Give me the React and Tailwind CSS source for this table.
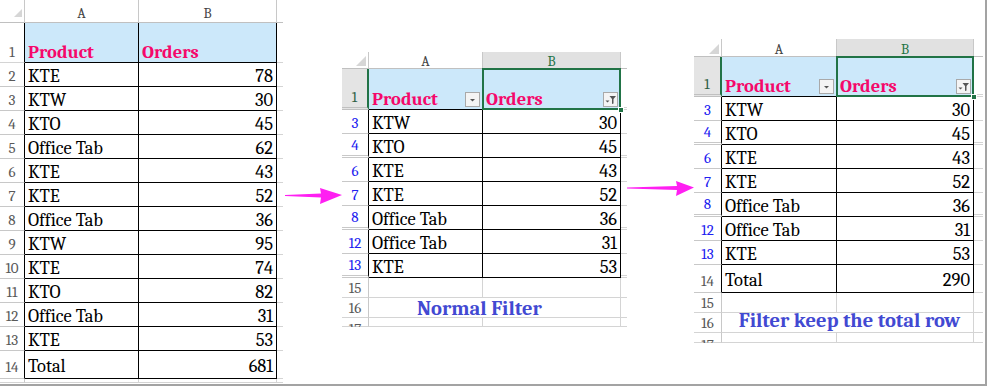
import React from 'react';

// Rows are [row number, product, orders]
const ALL_ROWS = [
  [2, 'KTE', 78],
  [3, 'KTW', 30],
  [4, 'KTO', 45],
  [5, 'Office Tab', 62],
  [6, 'KTE', 43],
  [7, 'KTE', 52],
  [8, 'Office Tab', 36],
  [9, 'KTW', 95],
  [10, 'KTE', 74],
  [11, 'KTO', 82],
  [12, 'Office Tab', 31],
  [13, 'KTE', 53],
];

const FILTERED_ROWS = [
  [3, 'KTW', 30],
  [4, 'KTO', 45],
  [6, 'KTE', 43],
  [7, 'KTE', 52],
  [8, 'Office Tab', 36],
  [12, 'Office Tab', 31],
  [13, 'KTE', 53],
];

const SHEETS = {
  left: {
    w: { hdr: 'w-[25px]', a: 'w-[114px]', b: 'w-[138px]', x: 'w-[6px]', ab: 'w-[252px]' },
    colHdrH: 'h-[23px]',
    colHdrPb: 'pb-[2px]',
    cornerPb: 'pb-[5px]',
    tri: 8,
    row1H: 'h-[40px]',
    rows: ALL_ROWS,
    total: [14, 'Total', 681],
    lastHidden: false,
    trailing: [{ n: 15, h: 'h-[4px]', blank: true }],
    filtered: false,
  },
  middle: {
    w: { hdr: 'w-[27px]', a: 'w-[114px]', b: 'w-[138px]', x: 'w-[6px]', ab: 'w-[252px]' },
    colHdrH: 'h-[17px]',
    colHdrPb: 'pb-0',
    cornerPb: 'pb-[2px]',
    tri: 10,
    row1H: 'h-[41px]',
    rows: FILTERED_ROWS,
    total: null,
    lastHidden: true,
    trailing: [
      { n: 15, h: 'h-[20px]' },
      { n: 16, h: 'h-[20px]', text: 'Normal Filter', textCls: 'pl-[48px] leading-[16px]' },
      { n: 17, h: 'h-[9px]', pt: 'pt-[4px]' },
    ],
    filtered: true,
  },
  right: {
    w: { hdr: 'w-[28px]', a: 'w-[115px]', b: 'w-[137px]', x: 'w-[9px]', ab: 'w-[252px]' },
    colHdrH: 'h-[18px]',
    colHdrPb: 'pb-0',
    cornerPb: 'pb-[2px]',
    tri: 10,
    row1H: 'h-[40px]',
    rows: FILTERED_ROWS,
    total: [14, 'Total', 290],
    lastHidden: false,
    trailing: [
      { n: 15, h: 'h-[20px]' },
      { n: 16, h: 'h-[20px]', text: 'Filter keep the total row', textCls: 'justify-center pl-[4px] leading-[22px]' },
      { n: 17, h: 'h-[10px]', pt: 'pt-[5px]' },
    ],
    filtered: true,
  },
};

function FilterButton({ funnel }) {
  return (
    <div className="absolute right-[2px] bottom-[2px] w-[15px] h-[15px] border border-[#a9a9a9] bg-[#f4f4f4]">
      <svg width="13" height="13" viewBox="0 0 13 13">
        {funnel ? (
          <>
            <polygon points="1.5,7.5 5.5,7.5 3.5,9.5" fill="#555" />
            <polygon points="5.5,3 12,3 9.5,6 9.5,10.5 8,11 8,6" fill="#555" />
          </>
        ) : (
          <polygon points="4,6 9,6 6.5,8.5" fill="#555" />
        )}
      </svg>
    </div>
  );
}

function Selection() {
  return (
    <>
      <div className="absolute -left-[1px] -top-[1px] -right-[1px] -bottom-[1px] border-2 border-[#217346]" />
      <div className="absolute -right-[4px] -bottom-[4px] w-[6px] h-[6px] bg-[#217346] border border-white" />
    </>
  );
}

function Sheet({ cfg }) {
  const { w, filtered } = cfg;
  const rowNumColor = filtered ? 'text-[#2020f0]' : 'text-[#595959]';

  return (
    <div className="flex flex-col">
      {/* column letters */}
      <div className={`flex ${cfg.colHdrH} text-[14px] leading-[13px] text-[#444]`}>
        <div className={`${w.hdr} flex items-end justify-end pr-[2px] ${cfg.cornerPb} border-r border-b border-r-[#c8c8c8] border-b-[#c0c0c0]`}>
          <svg width={cfg.tri} height={cfg.tri} viewBox="0 0 10 10">
            <polygon points="10,0 10,10 0,10" fill="#d6d6d6" />
          </svg>
        </div>
        <div className={`${w.a} flex items-end justify-center ${cfg.colHdrPb} border-r border-b border-r-[#c8c8c8] border-b-[#c0c0c0]`}>
          A
        </div>
        <div
          className={`${w.b} flex items-end justify-center ${cfg.colHdrPb} border-r border-b border-r-[#c8c8c8] border-b-[#c0c0c0] ${
            filtered ? 'bg-[#e1e1e1] text-[#217346]' : ''
          }`}
        >
          B
        </div>
        <div className={`${w.x} border-b border-b-[#c0c0c0]`} />
      </div>

      {/* header row */}
      <div className={`flex ${cfg.row1H}`}>
        <div
          className={`${w.hdr} flex items-end justify-center pb-[3px] text-[15px] leading-[14px] ${
            filtered
              ? 'bg-[#e4e4e4] text-[#2f5f44] border-r-2 border-r-[#217346] border-b-[3px] border-double border-b-[#c0c0c0]'
              : 'text-[#595959] border-r border-b border-r-black border-b-[#d4d4d4]'
          }`}
        >
          1
        </div>
        <div className={`${w.a} relative flex items-end pl-[3px] bg-[#cce8fa] border-r border-b border-r-black border-b-black text-[18.5px] leading-[19px] font-bold text-[#f5086b]`}>
          Product
          {filtered && <FilterButton />}
        </div>
        <div className={`${w.b} relative flex items-end pl-[3px] bg-[#cce8fa] border-r border-b border-r-black border-b-black text-[18.5px] leading-[19px] font-bold text-[#f5086b]`}>
          Orders
          {filtered && <FilterButton funnel />}
          {filtered && <Selection />}
        </div>
        <div className={`${w.x} border-b ${filtered ? 'border-b-[3px] border-double' : ''} border-b-[#d4d4d4]`} />
      </div>

      {/* data rows */}
      {cfg.rows.map(([n, p, o], i) => {
        const next = cfg.rows[i + 1];
        const hidden = next ? next[0] - n > 1 : cfg.lastHidden;
        return (
          <div key={n} className="flex h-[24px]">
            <div
              className={`${w.hdr} flex items-end justify-center pb-[3px] text-[15px] leading-[14px] ${rowNumColor} border-r border-r-black ${
                hidden ? 'border-b-[3px] border-double' : 'border-b'
              } border-b-[#c8c8c8]`}
            >
              {n}
            </div>
            <div className={`${w.a} flex items-end pl-[3px] border-r border-b border-r-black border-b-black text-[18.5px] leading-[19px] whitespace-nowrap`}>
              {p}
            </div>
            <div className={`${w.b} flex items-end justify-end pr-[3px] border-r border-b border-r-black border-b-black text-[18.5px] leading-[19px]`}>
              {o}
            </div>
            <div className={`${w.x} ${hidden ? 'border-b-[3px] border-double' : 'border-b'} border-b-[#d4d4d4]`} />
          </div>
        );
      })}

      {/* total row */}
      {cfg.total && (
        <div className="flex h-[28px]">
          <div className={`${w.hdr} flex items-end justify-center pb-[4px] text-[15px] leading-[14px] text-[#595959] border-r border-b border-r-black border-b-[#c8c8c8]`}>
            {cfg.total[0]}
          </div>
          <div className={`${w.a} flex items-end pl-[3px] pb-[2px] border-r border-b border-r-black border-b-black text-[18.5px] leading-[19px]`}>
            {cfg.total[1]}
          </div>
          <div className={`${w.b} flex items-end justify-end pr-[3px] pb-[2px] border-r border-b border-r-black border-b-black text-[18.5px] leading-[19px]`}>
            {cfg.total[2]}
          </div>
          <div className={`${w.x} border-b border-b-[#d4d4d4]`} />
        </div>
      )}

      {/* empty rows below */}
      {cfg.trailing.map((r) => (
        <div key={r.n} className={`flex ${r.h} ${r.pt || r.blank ? 'overflow-hidden' : ''}`}>
          <div
            className={`${w.hdr} flex ${r.pt ? `items-start ${r.pt}` : 'items-end pb-[2px]'} justify-center text-[15px] leading-[14px] text-[#595959] border-r border-b border-r-[#c8c8c8] border-b-[#d4d4d4]`}
          >
            {r.blank ? null : r.n}
          </div>
          {r.text ? (
            <div className={`${w.ab} flex items-end ${r.textCls} border-r border-b border-r-[#d4d4d4] border-b-[#d4d4d4] text-[20.5px] font-bold text-[#4249d2] whitespace-nowrap`}>
              {r.text}
            </div>
          ) : (
            <>
              <div className={`${w.a} border-r border-b border-r-[#d4d4d4] border-b-[#d4d4d4]`} />
              <div className={`${w.b} border-r border-b border-r-[#d4d4d4] border-b-[#d4d4d4]`} />
            </>
          )}
          <div className={`${w.x} border-b border-b-[#d4d4d4]`} />
        </div>
      ))}
    </div>
  );
}

function Arrow({ className, width, points }) {
  return (
    <svg className={className} width={width} height="22" viewBox={`0 0 ${width} 22`}>
      <polygon points={points} fill="#ff1ff2" />
    </svg>
  );
}

export default function App() {
  return (
    <div className="w-[988px] h-[387px] bg-white overflow-hidden font-serif text-black">
      <div className="flex items-start w-[987px] h-[386px] border-r-2 border-b-2 border-r-[#a3a3a3] border-b-[#a3a3a3] overflow-hidden">
        <Sheet cfg={SHEETS.left} />
        <Arrow
          className="ml-[2px] mt-[185px] shrink-0"
          width={57}
          points="0,10 36,8.5 35,3 57,10 35,19 36,12.5 0,11"
        />
        <div className="mt-[52px]">
          <Sheet cfg={SHEETS.middle} />
        </div>
        <Arrow
          className="mt-[176px] shrink-0"
          width={67}
          points="0,11.5 50,10 49,5 67,11.5 49,20 50,14 0,12.5"
        />
        <div className="mt-[39px]">
          <Sheet cfg={SHEETS.right} />
        </div>
      </div>
    </div>
  );
}
